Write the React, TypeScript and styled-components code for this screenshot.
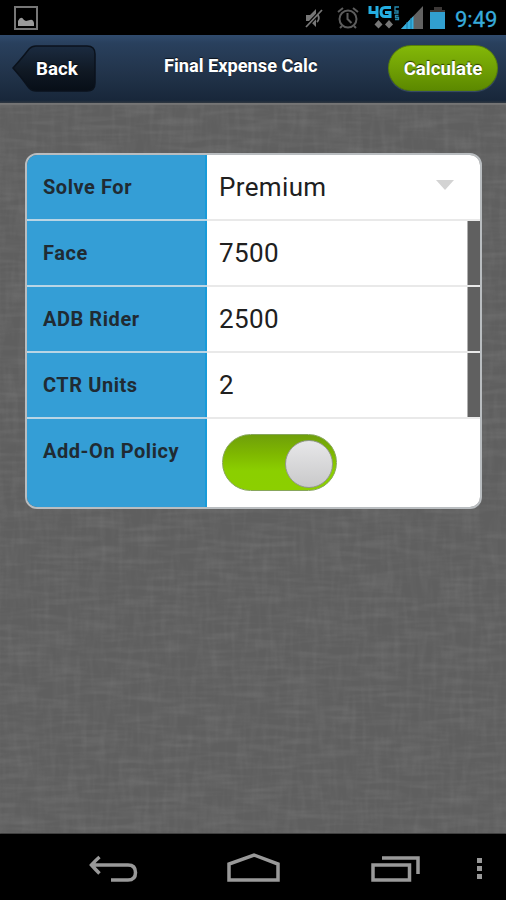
import React from 'react';
import styled, { createGlobalStyle } from 'styled-components';

const Global = createGlobalStyle`
  * { box-sizing: border-box; }
  body { margin: 0; background: #000; font-family: Roboto, sans-serif; }
  svg { display: block; }
`;

const weave = (freq: string, seed: number, strength: number) =>
  `url("data:image/svg+xml,${encodeURIComponent(
    `<svg xmlns="http://www.w3.org/2000/svg" width="506" height="732"><filter id="f" x="0" y="0" width="100%" height="100%"><feTurbulence type="fractalNoise" baseFrequency="${freq}" numOctaves="2" seed="${seed}"/><feColorMatrix values="0 0 0 0 0.6  0 0 0 0 0.6  0 0 0 0 0.6  ${strength} 0 0 0 ${-strength * 0.42}"/></filter><rect width="506" height="732" filter="url(#f)"/></svg>`
  )}")`;

const Screen = styled.div`
  width: 506px;
  height: 900px;
  display: flex;
  flex-direction: column;
  overflow: hidden;
`;

const StatusBar = styled.header`
  height: 35px;
  flex: none;
  display: flex;
  align-items: flex-start;
  justify-content: space-between;
  padding-left: 14px;
  background: #000;
`;

const StatusGroup = styled.div`
  display: flex;
  height: 35px;
`;

const Clock = styled.time`
  width: 53px;
  padding: 7px 0 0 2px;
  font-size: 22px;
  line-height: 25px;
  color: #36aadb;
  -webkit-text-stroke: 0.3px #36aadb;
`;

const TitleBar = styled.nav`
  height: 68px;
  flex: none;
  display: grid;
  grid-template-columns: 96px 1fr 118px;
  padding-top: 10px;
  background: linear-gradient(#304b6d 0, #29405d 12%, #22344b 55%, #18273a 96%, #303841 100%);
`;

const BackButton = styled.button`
  display: grid;
  width: 84px;
  height: 47px;
  margin: 0 0 0 12px;
  padding: 0;
  border: 0;
  background: none;
  font: inherit;
  & > * { grid-area: 1 / 1; }
`;

const BarLabel = styled.span<{ $size: number }>`
  font-size: ${p => p.$size}px;
  line-height: 24px;
  font-weight: 700;
  color: #fff;
  text-shadow: 0 -1px 1px rgba(0, 0, 0, 0.65);
  white-space: nowrap;
`;

const BackText = styled(BarLabel)`
  padding: 12px 0 0 24px;
  text-align: left;
`;

const Title = styled.h1`
  margin: 9px 0 0 68px;
  line-height: 24px;
  font-size: 18px;
  display: flex;
`;

const CalculateButton = styled.button`
  width: 110px;
  height: 46px;
  margin: 0;
  padding: 2px 0 0;
  border: 1px solid #577f09;
  border-radius: 23px;
  background: linear-gradient(#83b808, #73a305 45%, #5c8900);
  box-shadow: 0 1px 1px rgba(120, 150, 180, 0.35);
  font: inherit;
`;

const Content = styled.main`
  height: 731px;
  flex: none;
  padding: 50px 24px 0 25px;
  background: ${weave('0.025 0.18', 4, 0.2)}, ${weave('0.16 0.03', 9, 0.13)}, #5f5f5f;
  box-shadow: inset 0 2px 1px #747474, inset 0 -1px 0 #3f3f3f;
`;

const Form = styled.form`
  height: 356px;
  border: 2px solid #b9bdc0;
  border-radius: 12px;
  overflow: hidden;
  display: grid;
  grid-template-rows: repeat(4, 66px) 88px;
`;

const Row = styled.div`
  display: grid;
  grid-template-columns: 180px 1fr;
`;

const Label = styled.label`
  padding: 20px 0 0 16px;
  font-size: 20px;
  line-height: 25px;
  font-weight: 700;
  color: #202b33;
  letter-spacing: 0.55px;
  background: #349ed6;
  box-shadow: inset -2px 0 0 #189bd9;
  border-bottom: 2px solid #b9d5e5;
  ${Row}:last-child & { border-bottom: 0; }
`;

const Value = styled.div<{ $inset?: boolean }>`
  display: flex;
  align-items: flex-start;
  justify-content: space-between;
  border-bottom: 2px solid #e9e9e9;
  background: #fff;
  ${p => p.$inset && 'background: linear-gradient(90deg, #fff 260px, #606060 261px);'}
  ${Row}:last-child & { border-bottom: 0; }
`;

const ValueText = styled.span`
  padding: 16px 0 0 12px;
  font-size: 26px;
  line-height: 32px;
  letter-spacing: 0.35px;
  color: #202020;
`;

const Arrow = styled.svg`
  margin: 24px 26px 0 0;
`;

const Toggle = styled.div`
  display: flex;
  justify-content: flex-end;
  width: 115px;
  height: 57px;
  margin: 15px 0 0 15px;
  padding: 5px 3px 0 0;
  border: 1px solid #87a65b;
  border-radius: 29px;
  background: linear-gradient(#6f9f0a, #7fb800 35%, #8bcf00 65%, #8ccf00);
`;

const Thumb = styled.div`
  width: 48px;
  height: 48px;
  border: 1px solid #93998e;
  border-radius: 50%;
  background: linear-gradient(#e7e7e9, #c9c9ca);
`;

const NavBar = styled.footer`
  height: 66px;
  flex: none;
  background: #000;
`;

function StatusIcons() {
  return (
    <svg width="151" height="35" viewBox="302 0 151 35" fill="none">
      <path d="M306 15h4l6-6v18l-6-6h-4z" fill="#777" />
      <path d="M306 27 322 10" stroke="#000" strokeWidth="4" />
      <path d="M318 15c1 2 1 5-1 7M306 27 322 10" stroke="#777" strokeWidth="1.800" />
      <g stroke="#5c5c5c" strokeWidth="2">
        <circle cx="348" cy="19" r="8.500" />
        <path d="M347.500 13v6l4 4M338 12l5-4M353 8l5 4M342 26l-2 2M354 26l2 2" />
      </g>
      <path d="M370 6v6.500h8M377 6v12M391 7.500h-6q-4 0-4 4.500t4 4.500h5v-4h-5" stroke="#24aee2" strokeWidth="3" />
      <path d="M399 7h-4v4h3v2h-4M398.500 15.500h-3v2h3v2h-3.500" stroke="#2589ae" strokeWidth="1.300" />
      <path d="M378.500 20l4 4.500-4 4-4-4zM389 20l4 4.500-4 4-4-4z" fill="#777" />
      <path d="M401 29 423 6v23z" fill="#626262" />
      <path d="M401 29 413.500 16v13z" fill="#35afe0" />
      <path d="M407 22v7M411 18v11" stroke="#197ca7" />
      <path d="M434 7h8v3h3v19h-15V10h4z" fill="#3c3837" />
      <path d="M430 12h15v17h-15z" fill="#319fd0" />
    </svg>
  );
}

const fields = [
  { label: 'Face', value: '7500' },
  { label: 'ADB Rider', value: '2500' },
  { label: 'CTR Units', value: '2' },
];

export default function App() {
  return (
    <Screen>
      <Global />
      <StatusBar>
        <svg width="25" height="35" viewBox="14 0 25 35" fill="none">
          <path d="M15 7h22v22H15z" stroke="#777" strokeWidth="2" />
          <path d="M18 26v-5q3-6 6-1l2 1 4-1q3-1 4 3v3z" fill="#9a9a9a" />
        </svg>
        <StatusGroup>
          <StatusIcons />
          <Clock>9:49</Clock>
        </StatusGroup>
      </StatusBar>
      <TitleBar>
        <BackButton>
          <svg width="84" height="47" viewBox="0 0 84 47">
            <defs>
              <linearGradient id="back" x1="0" y1="0" x2="0" y2="1">
                <stop offset="0" stopColor="#1b2b40" />
                <stop offset=".55" stopColor="#101924" />
                <stop offset="1" stopColor="#070e17" />
              </linearGradient>
            </defs>
            <path d="M1 23Q11 12 17 4Q20 1 24 1H75Q83 1 83 9V38Q83 46 75 46H24Q20 46 17 43Q10 33 1 23Z" fill="url(#back)" stroke="#0b121c" strokeWidth="1.500" />
          </svg>
          <BackText $size={18.7}>Back</BackText>
        </BackButton>
        <Title><BarLabel $size={18.2}>Final Expense Calc</BarLabel></Title>
        <CalculateButton><BarLabel $size={18.7}>Calculate</BarLabel></CalculateButton>
      </TitleBar>
      <Content>
        <Form>
          <Row>
            <Label>Solve For</Label>
            <Value>
              <ValueText>Premium</ValueText>
              <Arrow width="18" height="11"><path d="M0 1h18l-9 10z" fill="#d3d3d3" /></Arrow>
            </Value>
          </Row>
          {fields.map(f => (
            <Row key={f.label}>
              <Label>{f.label}</Label>
              <Value $inset><ValueText>{f.value}</ValueText></Value>
            </Row>
          ))}
          <Row>
            <Label>Add-On Policy</Label>
            <Value><Toggle><Thumb /></Toggle></Value>
          </Row>
        </Form>
      </Content>
      <NavBar>
        <svg width="506" height="66" viewBox="0 834 506 66" fill="none" stroke="#999" strokeWidth="3.500">
          <path d="M99.500 857Q96 860 91.500 865 96 870 99.500 873.500M92 865h36q7.500 0 7.500 7.500t-7.500 7.500h-17" />
          <path d="M229 880V864l25-9 24 9v16z" />
          <path d="M373 865h36.500v15H373zM382 858h36v16" />
          <path d="M479.500 858v21" strokeWidth="5" strokeDasharray="5 3" />
        </svg>
      </NavBar>
    </Screen>
  );
}
